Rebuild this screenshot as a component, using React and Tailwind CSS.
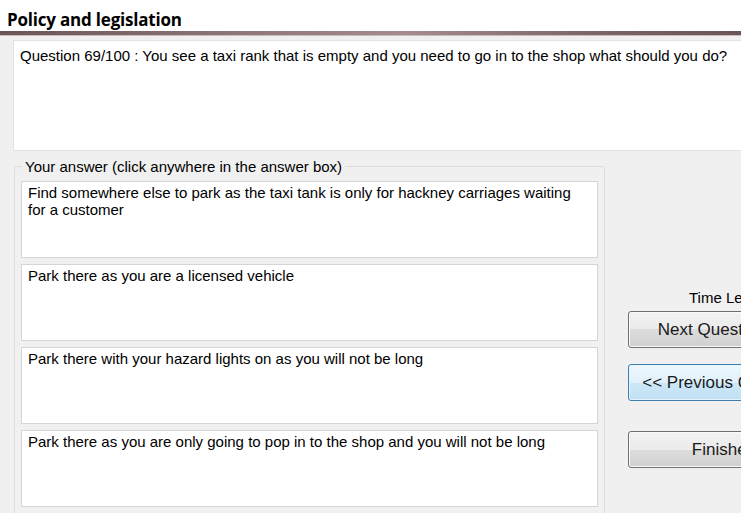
const ANSWERS = [
  'Find somewhere else to park as the taxi tank is only for hackney carriages waiting for a customer',
  'Park there as you are a licensed vehicle',
  'Park there with your hazard lights on as you will not be long',
  'Park there as you are only going to pop in to the shop and you will not be long',
]

function WinButton({ children, focused, className = '' }) {
  const skin = focused
    ? 'border-[#3c7fb1] bg-[linear-gradient(#eef7fd_0%,#e0f0fb_50%,#cde7f8_50%,#c0e0f5_100%)] shadow-[inset_0_0_0_1px_#e6f3fc]'
    : 'border-[#707070] bg-[linear-gradient(#f2f2f2_0%,#ebebeb_50%,#dddddd_50%,#cfcfcf_100%)] shadow-[inset_0_0_0_1px_#fbfbfb]'
  return (
    <div
      className={`h-[37px] w-[192px] shrink-0 rounded-[3px] border flex items-center justify-center text-[17px] text-[#1a1a1a] whitespace-nowrap ${skin} ${className}`}
    >
      {children}
    </div>
  )
}

export default function App() {
  return (
    <div className="w-[741px] h-[513px] overflow-hidden bg-[#f0f0f0] font-['Liberation_Sans',Arial,sans-serif]">
      {/* title */}
      <div className="h-[31px] bg-white pl-[7px] pt-[10px]">
        <h1 className="font-['Open_Sans',sans-serif] font-bold text-[17px] leading-[20px] text-black tracking-[-0.2px]">
          Policy and legislation
        </h1>
      </div>
      <div className="h-[5px] bg-[linear-gradient(90deg,#6a5454_0%,#8d7474_30%,#a58b8b_55%,#7d6565_80%,#6a5454_100%)] border-b border-[#c9bcbc]" />

      {/* question */}
      <div className="ml-[13px] mt-[4px] h-[111px] w-[740px] bg-white border border-[#e3e3e3] pl-[6px] pt-[6px] text-[15px] leading-[17px] text-black whitespace-nowrap">
        Question 69/100 : You see a taxi rank that is empty and you need to go in to the shop what should you do?
      </div>

      <div className="flex">
        {/* answers group */}
        <fieldset className="ml-[14px] mt-[7px] w-[591px] h-[400px] border border-[#dcdcdc] rounded-[3px] pl-[6px] pr-[6px] shrink-0">
          <legend className="ml-[1px] px-[3px] text-[15px] leading-[17px] text-black">
            Your answer (click anywhere in the answer box)
          </legend>
          <div className="flex flex-col gap-[6px] mt-[6px]">
            {ANSWERS.map((a) => (
              <div
                key={a}
                className="h-[77px] w-[577px] bg-white border border-[#d5d5d5] pl-[6px] pr-[18px] pt-[2px] text-[15px] leading-[17px] text-black"
              >
                {a}
              </div>
            ))}
          </div>
        </fieldset>

        {/* side controls */}
        <div className="flex flex-col pl-[23px] pt-[138px]">
          <div className="pl-[61px] text-[15px] leading-[17px] text-black whitespace-nowrap">Time Left: 00:00</div>
          <WinButton className="mt-[5px]">Next Question &gt;&gt;</WinButton>
          <WinButton focused className="mt-[16px]">&lt;&lt; Previous Question</WinButton>
          <WinButton className="mt-[30px]">Finished</WinButton>
        </div>
      </div>
    </div>
  )
}
